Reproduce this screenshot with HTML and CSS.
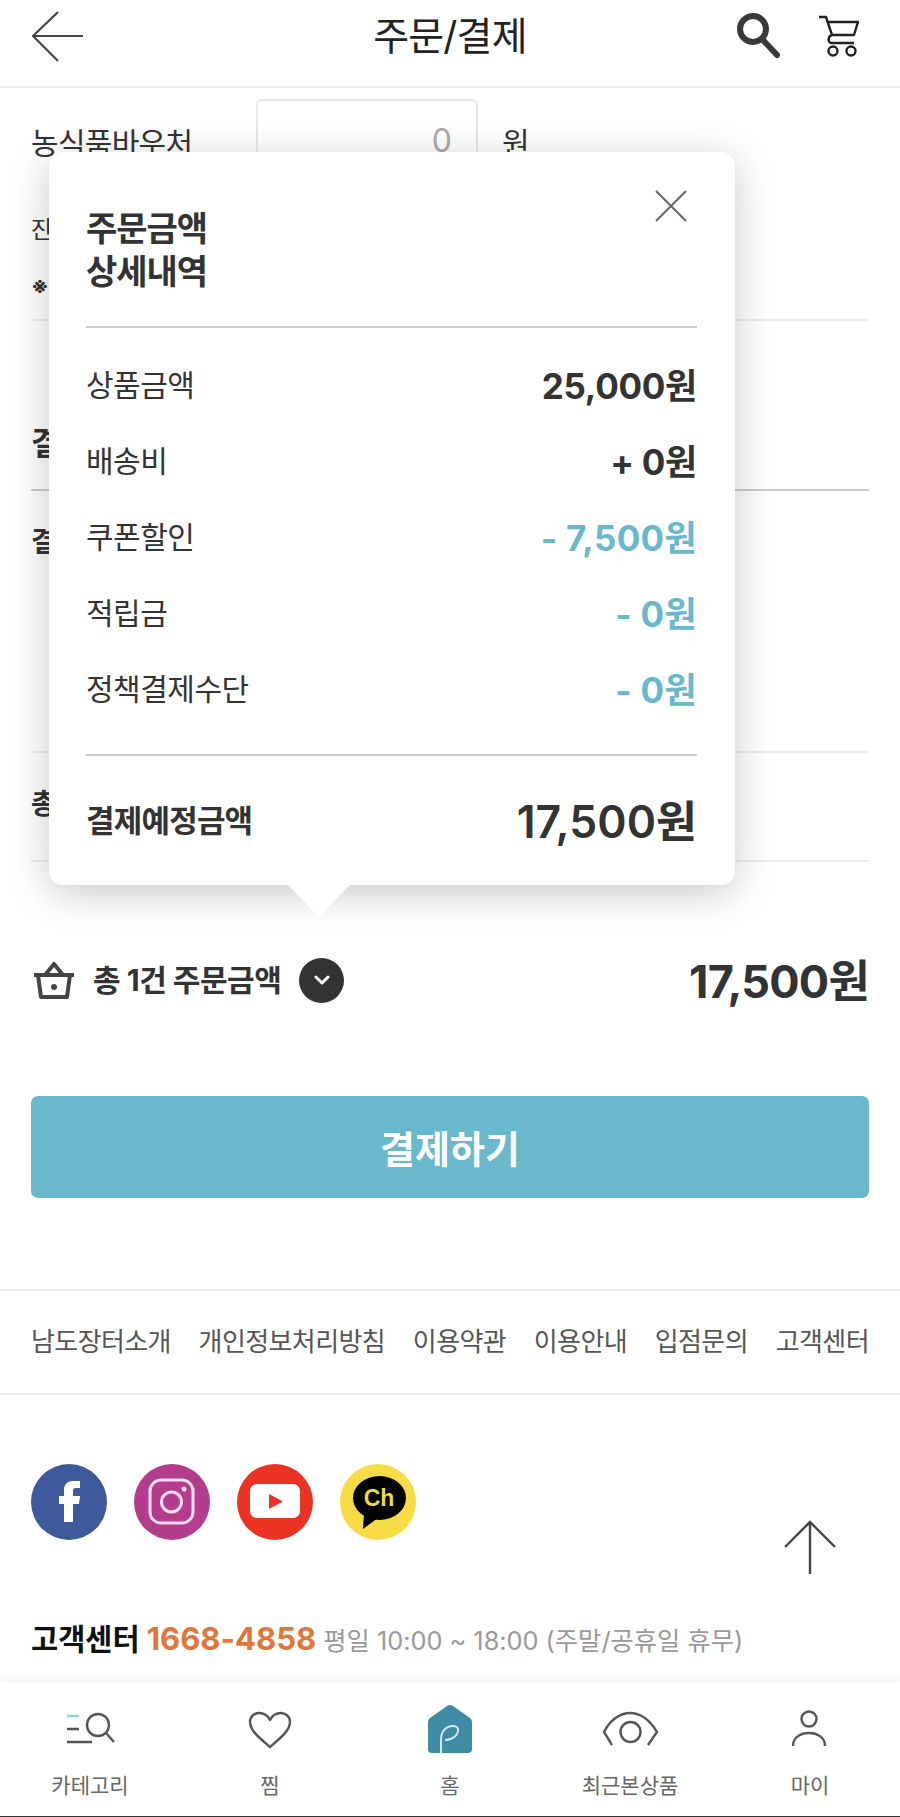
FILE: index.html
```html
<!DOCTYPE html>
<html lang="ko">
  <head>
    <meta charset="UTF-8" />
    <meta name="viewport" content="width=device-width, initial-scale=1.0" />
    <title>주문/결제</title>
    <link rel="stylesheet" href="styles.css">
  </head>
  <body>
    <div class="page">
      <header class="top">
        <svg class="top-back" width="52" height="52" viewBox="0 0 52 52" fill="none" stroke="#444" stroke-width="2.2"><path d="M26 2 1 26l25 25M1 26h50"/></svg>
        <h1 class="top-title">주문/결제</h1>
        <svg class="top-search" width="46" height="46" viewBox="0 0 46 46" fill="none" stroke="#3a3a3a"><circle cx="18" cy="16" r="13" stroke-width="6"/><path d="m28 27 14 15" stroke-width="6" stroke-linecap="round"/></svg>
        <svg class="top-cart" width="44" height="44" viewBox="0 0 44 44" fill="none" stroke="#222" stroke-width="2.4" stroke-linejoin="round"><path d="M2 3h7l6 18c-4 1-5 8 0 8h22M11 8h30l-4 13H15"/><circle cx="16" cy="37" r="4.500"/><circle cx="34" cy="37" r="4.500"/></svg>
      </header>

      <section class="form">
        <div class="form-voucher">
          <span class="form-label">농식품바우처</span>
          <div class="form-input">0</div>
          <span class="form-unit">원</span>
        </div>
        <p class="form-balance">잔</p>
        <p class="form-note">※</p>
      </section>

      <section class="pay">
        <h2 class="pay-head">결</h2>
        <div class="pay-method">결</div>
        <div class="pay-sum">총</div>
      </section>

      <section class="total">
        <svg class="total-basket" width="42" height="37" viewBox="0 0 42 37" fill="none" stroke="#444" stroke-width="4" stroke-linejoin="round"><path d="M1 13h40M5 13l3 22h26l3-22M12 13l9-11 9 11"/><circle cx="21" cy="25" r="3" fill="#444" stroke="none"/></svg>
        <span class="total-label">총 1건 주문금액</span>
        <span class="total-toggle"><svg width="16" height="10" viewBox="0 0 16 10" fill="none" stroke="#fff" stroke-width="3" stroke-linecap="round" stroke-linejoin="round"><path d="m2 2 6 6 6-6"/></svg></span>
        <strong class="total-amount">17,500원</strong>
      </section>

      <button class="pay-btn">결제하기</button>

      <nav class="links">
        <span>남도장터소개</span>
        <span>개인정보처리방침</span>
        <span>이용약관</span>
        <span>이용안내</span>
        <span>입점문의</span>
        <span>고객센터</span>
      </nav>

      <section class="social">
        <svg width="76" height="76" viewBox="0 0 76 76"><circle cx="38" cy="38" r="38" fill="#3f5a9b"/><path d="M33 58V40h-5v-8h5v-6c0-6 4-9 9-9h7v7h-4c-2.500 0-3 1-3 3v5h7l-1 8h-6v18z" fill="#fff"/></svg>
        <svg width="76" height="76" viewBox="0 0 76 76"><circle cx="38" cy="38" r="38" fill="#b33c8c"/><rect x="16" y="16" width="43" height="43" rx="11" fill="none" stroke="#fde" stroke-width="3"/><circle cx="37.500" cy="38" r="10" fill="none" stroke="#fde" stroke-width="3"/><circle cx="50" cy="25" r="2.500" fill="#fde"/></svg>
        <svg width="76" height="76" viewBox="0 0 76 76"><circle cx="38" cy="38" r="38" fill="#ea3323"/><rect x="13" y="20" width="50" height="34" rx="7" fill="#fff"/><path d="M32 30v15l14-7.500z" fill="#ea3323"/></svg>
        <svg width="76" height="76" viewBox="0 0 76 76"><circle cx="38" cy="38" r="38" fill="#f8dc45"/><ellipse cx="39.500" cy="34" rx="26.500" ry="22" fill="#000"/><path d="M24 50l-1 15 15-11z" fill="#000"/><text class="social-ch" x="39" y="42" text-anchor="middle">Ch</text></svg>
      </section>

      <svg class="to-top" width="52" height="54" viewBox="0 0 52 54" fill="none" stroke="#444" stroke-width="2.4"><path d="M1 27 26 2l25 25M26 2v52"/></svg>

      <p class="center"><b>고객센터</b> <em>1668-4858</em> <span>평일 10:00 ~ 18:00 (주말/공휴일 휴무)</span></p>

      <nav class="tabs">
        <a class="tab">
          <svg width="50" height="50" viewBox="0 0 50 50" fill="none" stroke="#555" stroke-width="2.4"><path d="M2 12h12" stroke="#8fd0dc"/><path d="M2 25h12M2 38h25"/><circle cx="33" cy="21" r="11"/><path d="m41 29 8 9"/></svg>
          <span>카테고리</span>
        </a>
        <a class="tab">
          <svg width="46" height="50" viewBox="0 0 46 50" fill="none" stroke="#555" stroke-width="2.4" stroke-linejoin="round"><path d="M23 43C14 35 3 27 3 18 3 12 8 9 12 9c5 0 9 3 11 7 2-4 6-7 11-7 4 0 9 3 9 9 0 9-11 17-20 25z"/></svg>
          <span>찜</span>
        </a>
        <a class="tab">
          <svg width="44" height="50" viewBox="0 0 44 50"><path d="M19 2q3-2 6 0l17 12q2 1.500 2 4v27q0 4-4 4H4q-4 0-4-4V18q0-2.500 2-4z" fill="#3e8ba3"/><path d="M13 49V36c0-10 6-14 12-14s6 5 4 8c-2 4-8 6-12 6" fill="none" stroke="#cfeaf0" stroke-width="2"/></svg>
          <span>홈</span>
        </a>
        <a class="tab">
          <svg width="60" height="50" viewBox="0 0 60 50" fill="none" stroke="#555" stroke-width="2.4"><path d="M12 41 4 28C10 16 20 9 30 9s20 7 27 19l-9 13"/><circle cx="30.500" cy="28" r="10"/></svg>
          <span>최근본상품</span>
        </a>
        <a class="tab">
          <svg width="36" height="50" viewBox="0 0 36 50" fill="none" stroke="#555" stroke-width="2.4"><circle cx="17" cy="15" r="7.500"/><path d="M1 42c0-9 8-13 16-13s16 4 16 13"/></svg>
          <span>마이</span>
        </a>
      </nav>

      <div class="detail">
        <button class="detail-close"><svg width="32" height="32" viewBox="0 0 32 32" fill="none" stroke="#666" stroke-width="2"><path d="m1 1 30 30M31 1 1 31"/></svg></button>
        <h2 class="detail-title">주문금액<br>상세내역</h2>
        <ul class="detail-list">
          <li><span>상품금액</span><b>25,000원</b></li>
          <li><span>배송비</span><b>+ 0원</b></li>
          <li><span>쿠폰할인</span><b class="teal">- 7,500원</b></li>
          <li><span>적립금</span><b class="teal">- 0원</b></li>
          <li><span>정책결제수단</span><b class="teal">- 0원</b></li>
        </ul>
        <div class="detail-sum"><span>결제예정금액</span><b>17,500원</b></div>
      </div>
    </div>
  </body>
</html>
```

FILE: styles.css
```css
*,
*::before,
*::after {
  box-sizing: border-box;
}
:root {
  --ink: #333;
  --teal: #6ab8cc;
  --line: #ececec;
}
body {
  margin: 0;
  background: #fff;
  color: var(--ink);
  font-family: "Inter", "Noto Sans CJK KR", sans-serif;
}
h1,
h2,
p,
ul {
  margin: 0;
  padding: 0;
}

.page {
  position: relative;
  width: 900px;
  height: 1817px;
  overflow: hidden;
}

/* header */
.top {
  position: relative;
  height: 88px;
  border-bottom: 2px solid var(--line);
  display: flex;
  align-items: center;
  padding: 0 39px 14px 32px;
}
.top-title {
  position: absolute;
  left: 0;
  right: 0;
  top: 12px;
  text-align: center;
  font-size: 39px;
  font-weight: 400;
  line-height: 48px;
  color: #222;
  letter-spacing: -0.8px;
}
.top-search {
  margin-left: auto;
  margin-right: 36px;
}

/* form behind the popup */
.form {
  height: 233px;
  margin: 0 31px;
  padding-top: 11px;
  border-bottom: 2px solid var(--line);
  font-size: 30px;
}
.form-voucher {
  display: flex;
  align-items: center;
  height: 84px;
}
.form-label {
  width: 225px;
  letter-spacing: -0.7px;
}
.form-input {
  width: 222px;
  height: 84px;
  border: 2px solid #e8e8e8;
  border-radius: 6px;
  text-align: right;
  padding: 20px 24px 0 0;
  font-size: 32px;
  color: #aaa;
}
.form-unit {
  margin-left: 24px;
}
.form-balance {
  margin-top: 30px;
  font-size: 24px;
  line-height: 34px;
}
.form-note {
  margin-top: 24px;
  font-size: 22px;
  line-height: 30px;
  font-weight: 700;
}

.pay {
  height: 541px;
  margin: 0 31px;
  font-size: 28px;
  font-weight: 700;
}
.pay-head {
  height: 170px;
  padding-top: 97px;
  font-size: 32px;
  border-bottom: 2px solid #ccc;
}
.pay-method {
  height: 262px;
  padding-top: 29px;
  border-bottom: 2px solid var(--line);
}
.pay-sum {
  height: 109px;
  padding-top: 29px;
  border-bottom: 2px solid var(--line);
}

.total {
  display: flex;
  align-items: center;
  height: 70px;
  margin: 83px 31px 0;
}
.total-basket {
  margin: 0 18px 0 2px;
}
.total-label {
  padding-bottom: 4px;
  font-size: 30px;
  font-weight: 700;
  letter-spacing: -0.5px;
}
.total-toggle {
  display: flex;
  align-items: center;
  justify-content: center;
  width: 45px;
  height: 45px;
  margin-left: 18px;
  border-radius: 50%;
  background: #333;
}
.total-amount {
  margin-left: auto;
  padding-bottom: 4px;
  font-size: 45px;
  letter-spacing: -0.8px;
}

.pay-btn {
  display: block;
  width: 838px;
  height: 102px;
  margin: 81px 31px 0;
  padding-bottom: 3px;
  border: 0;
  border-radius: 7px;
  background: var(--teal);
  color: #fff;
  font: 700 38px "Inter", "Noto Sans CJK KR", sans-serif;
}

.links {
  display: flex;
  justify-content: space-between;
  align-items: center;
  height: 106px;
  margin-top: 91px;
  padding: 0 31px 6px;
  border-top: 2px solid var(--line);
  border-bottom: 2px solid var(--line);
  font-size: 26px;
  letter-spacing: -0.6px;
  color: #555;
}

.social {
  display: flex;
  gap: 27px;
  margin: 69px 31px 0;
}
.social svg {
  display: block;
}
.social-ch {
  font: 700 23px "Liberation Sans", sans-serif;
  fill: #f0d84a;
}

/* floats over the footer */
.to-top {
  position: absolute;
  left: 784px;
  top: 1520px;
}

.center {
  margin: 79px 31px 0;
  line-height: 40px;
  font-size: 25.300px;
  white-space: nowrap;
}
.center b {
  color: #111;
  font-size: 29.500px;
}
.center em {
  font-style: normal;
  font-weight: 700;
  font-size: 31px;
  color: #e0763a;
}
.center span {
  color: #999;
}

.tabs {
  position: absolute;
  left: 0;
  right: 0;
  top: 1682px;
  height: 135px;
  display: flex;
  background: #fff;
  border-bottom: 1px solid #333;
  box-shadow: 0 -4px 8px rgba(0, 0, 0, 0.05);
}
.tab {
  flex: 1;
  display: flex;
  flex-direction: column;
  align-items: center;
  gap: 17px;
  padding-top: 22px;
  font-size: 21px;
  line-height: 30px;
  color: #666;
}

/* popup */
.detail {
  position: absolute;
  left: 49px;
  top: 152px;
  width: 686px;
  height: 733px;
  padding: 55px 38px 0 37px;
  background: #fff;
  border-radius: 14px;
  box-shadow: 0 8px 40px rgba(0, 0, 0, 0.22);
}
.detail::after {
  content: "";
  position: absolute;
  left: 239px;
  bottom: -32px;
  border: solid transparent;
  border-width: 32px 31px 0;
  border-top-color: #fff;
}
.detail-close {
  position: absolute;
  right: 48px;
  top: 38px;
  padding: 0;
  border: 0;
  background: none;
}
.detail-close svg {
  display: block;
}
.detail-title {
  font-size: 34px;
  line-height: 43px;
  font-weight: 700;
  letter-spacing: -1px;
  padding-bottom: 33px;
  border-bottom: 2px solid #ccc;
}
.detail-list {
  list-style: none;
  padding: 17px 0 29px;
  border-bottom: 2px solid #ccc;
}
.detail-list li {
  display: flex;
  justify-content: space-between;
  align-items: center;
  height: 76px;
  font-size: 30px;
  letter-spacing: -0.5px;
}
.detail-list b {
  font-size: 35px;
  letter-spacing: -0.3px;
}
.detail-list .teal {
  color: var(--teal);
  letter-spacing: 0.3px;
}
.detail-sum {
  display: flex;
  justify-content: space-between;
  align-items: center;
  height: 128px;
  padding-bottom: 4px;
  font-size: 31px;
  font-weight: 700;
  letter-spacing: -0.8px;
}
.detail-sum b {
  font-size: 44.500px;
  font-weight: 600;
  letter-spacing: 0;
}
```
